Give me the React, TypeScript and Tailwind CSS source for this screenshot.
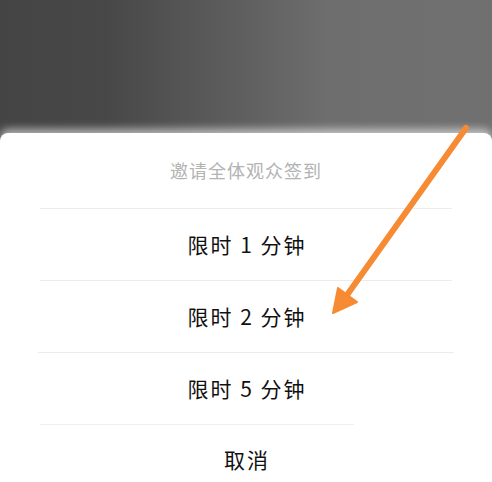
const options = ["限时 1 分钟", "限时 2 分钟", "限时 5 分钟"];

function Arrow() {
  return (
    <svg className="pointer-events-none absolute left-0 top-0" width="492" height="482" viewBox="0 0 492 482">
      <line x1="466" y1="128" x2="347" y2="295" stroke="#f68b33" strokeWidth="6" strokeLinecap="round" />
      <polygon points="333,313 338,288 357,302" fill="#f68b33" stroke="#f68b33" strokeWidth="2" strokeLinejoin="round" />
    </svg>
  );
}

export default function App() {
  return (
    <div
      className="relative flex h-[482px] w-[492px] flex-col overflow-hidden bg-[linear-gradient(90deg,#444444_0%,#484848_22%,#5d5d5d_47%,#6e6e6e_67%,#707070_100%)]"
      style={{ fontFamily: '"Noto Sans CJK SC", "Noto Sans", sans-serif' }}
    >
      <div className="h-[133px] shrink-0" />
      <div className="flex flex-1 flex-col rounded-t-[8px] bg-white shadow-[0_-4px_8px_rgba(255,255,255,0.6)]">
        <div className="flex h-[75px] items-center justify-center text-[18px] tracking-[1px] text-[#b3b3b3]">
          邀请全体观众签到
        </div>
        {options.map((o, i) => (
          <div key={o} className={i === 2 ? "mx-[38px] border-t border-[#ececec]" : "mx-[40px] border-t border-[#ececec]"}>
            <div className="flex h-[71px] items-center justify-center pl-[2px] text-[21px] tracking-[2px] text-[#111111]">
              {o}
            </div>
          </div>
        ))}
        <div className="mx-[40px] mr-[138px] border-t border-[#efefef]" />
        <div className="flex h-[70px] items-center justify-center pl-[2px] text-[21px] tracking-[2px] text-[#111111]">
          取消
        </div>
      </div>
      <Arrow />
    </div>
  );
}
